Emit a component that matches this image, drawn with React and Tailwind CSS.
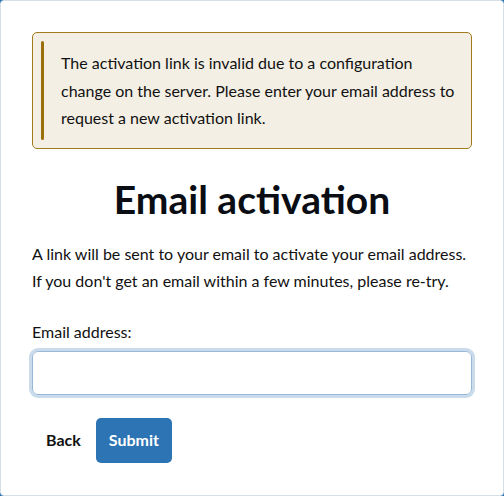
import React from 'react';

const App = () => {
  return (
    <div className="h-[496px] w-[504px] bg-[#2c74b3] font-['Lato','Noto_Sans',sans-serif] text-[#111]">
      <div className="h-full w-full rounded-[4px] border border-[#d7dee6] bg-white px-[31px] pt-[31px]">
        <div className="flex gap-[17px] rounded-[5px] border border-[#a07c1c] bg-[#f4efe4] py-[8px] pl-[8px] pr-[16px]">
          <div className="w-[3px] shrink-0 rounded-full bg-[#9a700c]" />
          <p className="py-[8px] text-[16px] leading-[27.5px]">
            The activation link is invalid due to a configuration change on the server. Please enter your email address to request a new activation link.
          </p>
        </div>

        <h1 className="mt-[26px] text-center text-[39px] font-bold leading-[48px] text-[#0a0e14]">Email activation</h1>

        <div className="mt-[17px] text-[16px] leading-[27px]">
          <p>A link will be sent to your email to activate your email address.</p>
          <p>If you don't get an email within a few minutes, please re-try.</p>
        </div>

        <form className="mt-[24px]" onSubmit={(e) => e.preventDefault()}>
          <label className="block text-[16px] leading-[27px]">Email address:</label>
          <input
            type="email"
            className="mt-[6px] block h-[44px] w-full rounded-[6px] border border-[#9ab9d8] outline-none ring-[3px] ring-[#cadcec]"
          />
          <div className="mt-[23px] flex items-center">
            <button type="button" className="py-[10px] pl-[14px] pr-[15px] text-[16px] font-bold">Back</button>
            <button type="submit" className="h-[45px] rounded-[5px] bg-[#2c74b3] px-[13px] text-[16px] font-bold text-white">Submit</button>
          </div>
        </form>
      </div>
    </div>
  );
};

export default App;
